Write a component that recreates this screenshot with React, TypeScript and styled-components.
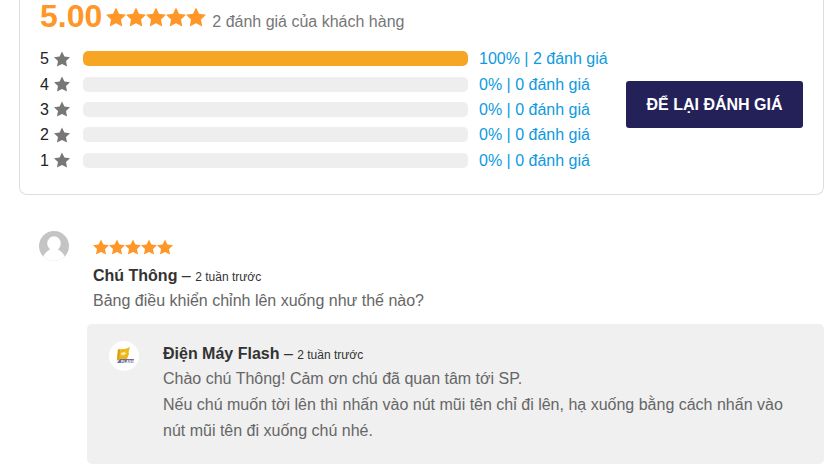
import React from "react";
import styled, { createGlobalStyle } from "styled-components";

const GlobalStyle = createGlobalStyle`
  *, *::before, *::after { box-sizing: border-box; }
  body {
    margin: 0;
    background: #fff;
    color: #333;
    font-family: "Liberation Sans", Arial, sans-serif;
    font-size: 16px;
    line-height: 26px;
  }
  p { margin: 0; }
`;

const Page = styled.main`
  padding: 0 6px 8px 19px;
`;

const SummaryCard = styled.section`
  padding: 0 20px 21px;
  border: 1px solid #ddd;
  border-top: 0;
  border-radius: 0 0 8px 8px;
`;

const SummaryHeader = styled.header`
  display: flex;
  align-items: baseline;
  height: 46px;
`;

const Score = styled.strong`
  margin-right: 4px;
  color: #ff9728;
  font-size: 32px;
  line-height: 32px;
`;

const StarStrip = styled.span<{ $size: number }>`
  display: inline-flex;
  color: #ff9728;

  svg {
    width: ${(p) => p.$size}px;
    height: ${(p) => p.$size}px;
    display: block;
  }
`;

const Caption = styled.span`
  margin-left: 6px;
  color: #777;
`;

const SummaryBody = styled.div`
  display: flex;
  align-items: center;
  gap: 20px;
`;

const Breakdown = styled.div`
  flex: 1;
  min-width: 0;
  min-height: 127px;
  display: grid;
  grid-auto-rows: 1fr;
`;

const BreakdownRow = styled.div`
  display: grid;
  grid-template-columns: 43px 1fr 138px;
  align-items: center;
  line-height: 25px;
`;

const Level = styled.span`
  display: flex;
  align-items: center;
  gap: 5px;
  color: #222;

  svg {
    width: 16px;
    height: 16px;
    color: #777;
  }
`;

const Track = styled.div`
  height: 15px;
  overflow: hidden;
  border-radius: 5px;
  background: #eee;
`;

const Fill = styled.div`
  height: 100%;
  border-radius: 5px;
  background: #f6a623;
`;

const CountLink = styled.a`
  padding-left: 11px;
  color: #0d9ae0;
  text-decoration: none;
  white-space: nowrap;
`;

const ReviewButton = styled.button`
  min-width: 177px;
  margin-bottom: 10px;
  padding: 0 18px;
  border: 0;
  border-radius: 3px;
  background: #242058;
  color: #fff;
  font: bold 16px/47px "Liberation Sans", Arial, sans-serif;
  white-space: nowrap;
  cursor: pointer;
`;

const Review = styled.article`
  display: flex;
  align-items: flex-start;
  gap: 24px;
  padding: 36px 20px 0;
`;

const Avatar = styled.div`
  flex: none;
  width: 30px;
  height: 30px;
  overflow: hidden;
  border-radius: 50%;
  background: #fff;

  svg { display: block; }
`;

const ReviewContent = styled.div`
  flex: 1;
  min-width: 0;
`;

const ReviewStars = styled.div`
  display: flex;
  padding: 8px 0;
`;

const Meta = styled.p`
  line-height: 25px;
`;

const Posted = styled.time`
  font-size: 12px;
  line-height: 12px;
`;

const Body = styled.p`
  color: #666;
`;

const Reply = styled.article`
  display: flex;
  align-items: flex-start;
  gap: 24px;
  margin: 10px 0 0 68px;
  padding: 17px 22px 20px;
  border-radius: 5px;
  background: #f0f0f0;
`;

const Star = () => (
  <svg viewBox="0 0 20 20" fill="currentColor" aria-hidden="true">
    <path d="M10 .5 13 6.8 20 7.7 15 12.6 16.3 19.5 10 16.2 3.7 19.5 5 12.6 0 7.7 7 6.8Z" />
  </svg>
);

const Stars = ({ size }: { size: number }) => (
  <StarStrip $size={size} role="img" aria-label="5 / 5">
    {[1, 2, 3, 4, 5].map((n) => (
      <Star key={n} />
    ))}
  </StarStrip>
);

const PersonIcon = () => (
  <svg width="30" height="30" viewBox="0 0 30 30" aria-hidden="true">
    <rect width="30" height="30" fill="#c4c4c4" />
    <ellipse cx="15" cy="12.5" rx="6.8" ry="7.2" fill="#fff" />
    <path d="M3 30C4 24 7 20.500 11.500 18V16H18.500V18C23 20.500 26 24 27 30Z" fill="#fff" />
  </svg>
);

const FlashLogo = () => (
  <svg width="30" height="30" viewBox="0 0 30 30" role="img" aria-label="Flash">
    <path d="M9 8.500 17 7.800 21 6 19.500 11 20 13 18 18 8 19.500Z" fill="#edb61b" />
    <path d="M9 8.500 11 8.300 10 18 8 19.500Z" fill="#d99b19" />
    <path d="M12 12 17 10.500 15.500 12.300 18 12.300 13 15 14 13.500 11.500 13.800Z" fill="#fff1b0" />
    <path d="M11 18 25 18 24.500 22 8 22Z" fill="#706b98" />
    <text x="12" y="21.500" fill="#fff" fontFamily="Liberation Sans, sans-serif" fontSize="4" fontWeight="bold">FLASH</text>
  </svg>
);

const levels = [
  { stars: 5, percent: 100, count: 2 },
  { stars: 4, percent: 0, count: 0 },
  { stars: 3, percent: 0, count: 0 },
  { stars: 2, percent: 0, count: 0 },
  { stars: 1, percent: 0, count: 0 },
];

export default function App() {
  return (
    <>
      <GlobalStyle />
      <Page lang="vi">
        <SummaryCard>
          <SummaryHeader>
            <Score>5.00</Score>
            <Stars size={20} />
            <Caption>2 đánh giá của khách hàng</Caption>
          </SummaryHeader>
          <SummaryBody>
            <Breakdown>
              {levels.map((l) => (
                <BreakdownRow key={l.stars}>
                  <Level>
                    {l.stars}
                    <Star />
                  </Level>
                  <Track>
                    <Fill style={{ width: `${l.percent}%` }} />
                  </Track>
                  <CountLink href="#reviews">{`${l.percent}% | ${l.count} đánh giá`}</CountLink>
                </BreakdownRow>
              ))}
            </Breakdown>
            <ReviewButton type="button">ĐỂ LẠI ĐÁNH GIÁ</ReviewButton>
          </SummaryBody>
        </SummaryCard>

        <section id="reviews">
          <Review>
            <Avatar>
              <PersonIcon />
            </Avatar>
            <ReviewContent>
              <ReviewStars>
                <Stars size={16} />
              </ReviewStars>
              <Meta>
                <strong>Chú Thông</strong> – <Posted>2 tuần trước</Posted>
              </Meta>
              <Body>Bảng điều khiển chỉnh lên xuống như thế nào?</Body>
            </ReviewContent>
          </Review>
          <Reply>
            <Avatar>
              <FlashLogo />
            </Avatar>
            <ReviewContent>
              <Meta>
                <strong>Điện Máy Flash</strong> – <Posted>2 tuần trước</Posted>
              </Meta>
              <Body>Chào chú Thông! Cảm ơn chú đã quan tâm tới SP.</Body>
              <Body>
                Nếu chú muốn tời lên thì nhấn vào nút mũi tên chỉ đi lên, hạ xuống bằng cách nhấn vào
                nút mũi tên đi xuống chú nhé.
              </Body>
            </ReviewContent>
          </Reply>
        </section>
      </Page>
    </>
  );
}
